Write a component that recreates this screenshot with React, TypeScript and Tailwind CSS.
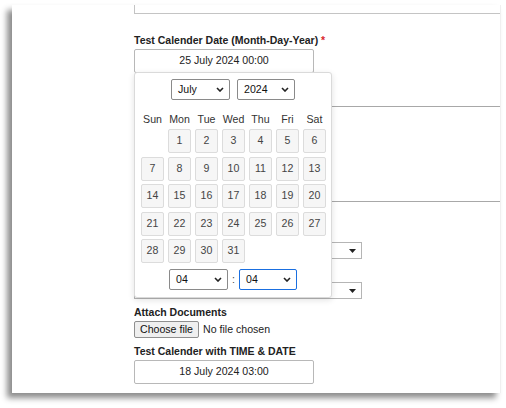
const font = { fontFamily: '"Liberation Sans", Arial, Helvetica, sans-serif' };

const weekdays = ['Sun', 'Mon', 'Tue', 'Wed', 'Thu', 'Fri', 'Sat'];
const days: (number | null)[] = [null, ...Array.from({ length: 31 }, (_, i) => i + 1)];

const Chevron = () => (
  <svg width="8" height="5" viewBox="0 0 8 5" className="shrink-0">
    <path d="M1 1 L4 4 L7 1" fill="none" stroke="#222" strokeWidth="1.6" />
  </svg>
);

const NativeSelect = ({ value, w, focused }: { value: string; w: string; focused?: boolean }) => (
  <div
    className={`${w} h-[21px] flex items-center justify-between pl-[6px] pr-[5px] rounded-[2px] bg-white text-[10.6px] text-[#111] ${
      focused ? 'border-[1.5px] border-[#1a6fe0]' : 'border border-[#8a8a8a]'
    }`}
  >
    <span>{value}</span>
    <Chevron />
  </div>
);

const OldSelect = ({ className }: { className: string }) => (
  <div className={`w-[228px] h-[17px] border border-[#b5b5b5] bg-white flex items-center justify-end pr-[5px] ${className}`}>
    <svg width="7" height="4" viewBox="0 0 7 4">
      <path d="M0 0 L7 0 L3.5 4 Z" fill="#222" />
    </svg>
  </div>
);

const DatePopup = () => (
  <div className="absolute left-0 top-[-1px] w-[198px] h-[226px] bg-white border border-[#dadada] rounded-[3px] shadow-[0_2px_6px_rgba(0,0,0,0.12)] pt-[6px]">
    <div className="flex justify-center gap-[7px]">
      <NativeSelect value="July" w="w-[59px]" />
      <NativeSelect value="2024" w="w-[58px]" />
    </div>
    <div className="grid grid-cols-[repeat(7,23px)] gap-x-[4px] pl-[6px] mt-[12px] text-[10.6px] leading-[14px] text-[#333]">
      {weekdays.map((d) => (
        <div key={d} className="text-center">
          {d}
        </div>
      ))}
    </div>
    <div className="grid grid-cols-[repeat(7,23px)] gap-x-[4px] gap-y-[3.5px] pl-[6px] mt-[3px]">
      {days.map((d, i) =>
        d === null ? (
          <div key={i} />
        ) : (
          <div
            key={i}
            className="h-[24px] flex items-center justify-center bg-[#f6f6f6] border border-[#dcdcdc] rounded-[2px] text-[10.6px] text-[#444]"
          >
            {d}
          </div>
        )
      )}
    </div>
    <div className="flex justify-center items-center mt-[6px]">
      <NativeSelect value="04" w="w-[59px]" />
      <span className="w-[11px] text-center text-[10.6px] text-[#444]">:</span>
      <NativeSelect value="04" w="w-[58px]" focused />
    </div>
  </div>
);

const DateInput = ({ value }: { value: string }) => (
  <div className="w-[180px] h-[24px] border border-[#b8b8b8] rounded-[2px] bg-white flex items-center justify-center text-[10.6px] text-[#222]">
    {value}
  </div>
);

export default function App() {
  return (
    <div className="w-[506px] h-[408px] bg-white pt-[5px] pl-[12px]" style={font}>
      <div className="w-[489px] h-[388px] bg-white overflow-hidden pl-[122px] shadow-[-5px_5px_6px_rgba(0,0,0,0.45)] border-r border-[#f0f0f0]">
        <div className="h-[9px] border-l border-b border-[#c4c4c4]" />

        <div className="mt-[19px] text-[10.5px] leading-[14px] font-bold text-[#222]">
          Test Calender Date (Month-Day-Year) <span className="text-[#d9262b]">*</span>
        </div>
        <div className="mt-[2px]">
          <DateInput value="25 July 2024 00:00" />
        </div>

        <div className="relative">
          <div className="h-[34px] border-b border-[#a8a8a8]" />
          <div className="h-[95px] border-b border-[#a8a8a8]" />
          <OldSelect className="mt-[40px]" />
          <OldSelect className="mt-[23px]" />
          <DatePopup />
        </div>

        <div className="mt-[6px] text-[10.5px] leading-[14px] font-bold text-[#222]">Attach Documents</div>
        <div className="mt-[2px] flex items-center gap-[4px] text-[10.6px]">
          <button className="h-[17px] px-[5px] bg-[#efefef] border border-[#8f8f8f] rounded-[2px] text-[#111] leading-none">
            Choose file
          </button>
          <span className="text-[#222]">No file chosen</span>
        </div>

        <div className="mt-[6px] text-[10.5px] leading-[14px] font-bold text-[#222]">Test Calender with TIME &amp; DATE</div>
        <div className="mt-[2px]">
          <DateInput value="18 July 2024 03:00" />
        </div>
      </div>
    </div>
  );
}
